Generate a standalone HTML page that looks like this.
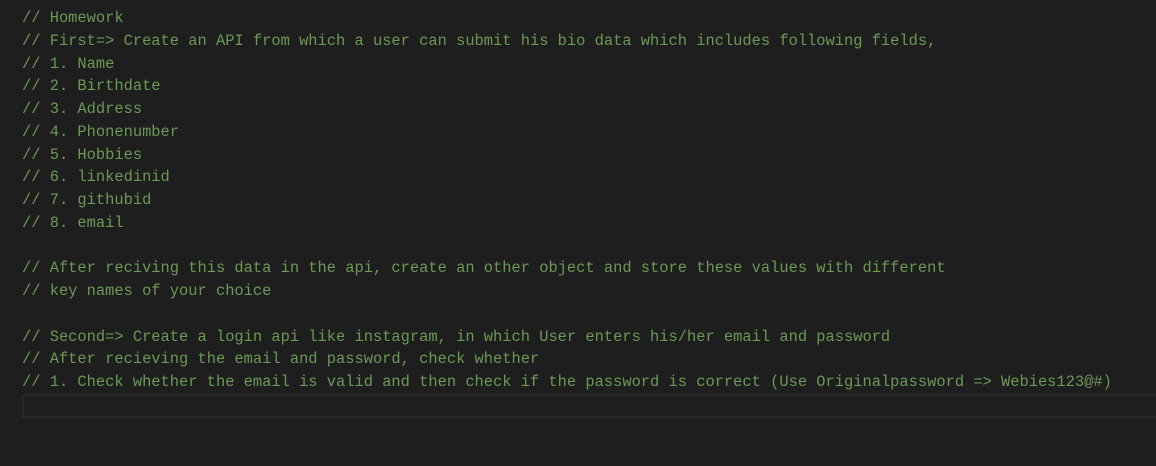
<!DOCTYPE html>
<html><head><style>
html,body{margin:0;padding:0;background:#1e1e1e;width:1156px;height:466px;overflow:hidden}
pre{position:absolute;left:22px;top:7px;margin:0;font-family:"Liberation Mono",monospace;font-size:15.4px;line-height:22.75px;color:#6a9955;white-space:pre}
.cur{position:absolute;left:22px;top:394px;width:1140px;height:20px;border:2px solid #282828;box-sizing:content-box}
</style></head><body>
<div class="cur"></div>
<pre>// Homework
// First=&gt; Create an API from which a user can submit his bio data which includes following fields,
// 1. Name
// 2. Birthdate
// 3. Address
// 4. Phonenumber
// 5. Hobbies
// 6. linkedinid
// 7. githubid
// 8. email

// After reciving this data in the api, create an other object and store these values with different
// key names of your choice

// Second=&gt; Create a login api like instagram, in which User enters his/her email and password
// After recieving the email and password, check whether
// 1. Check whether the email is valid and then check if the password is correct (Use Originalpassword =&gt; Webies123@#)</pre>
</body></html>
